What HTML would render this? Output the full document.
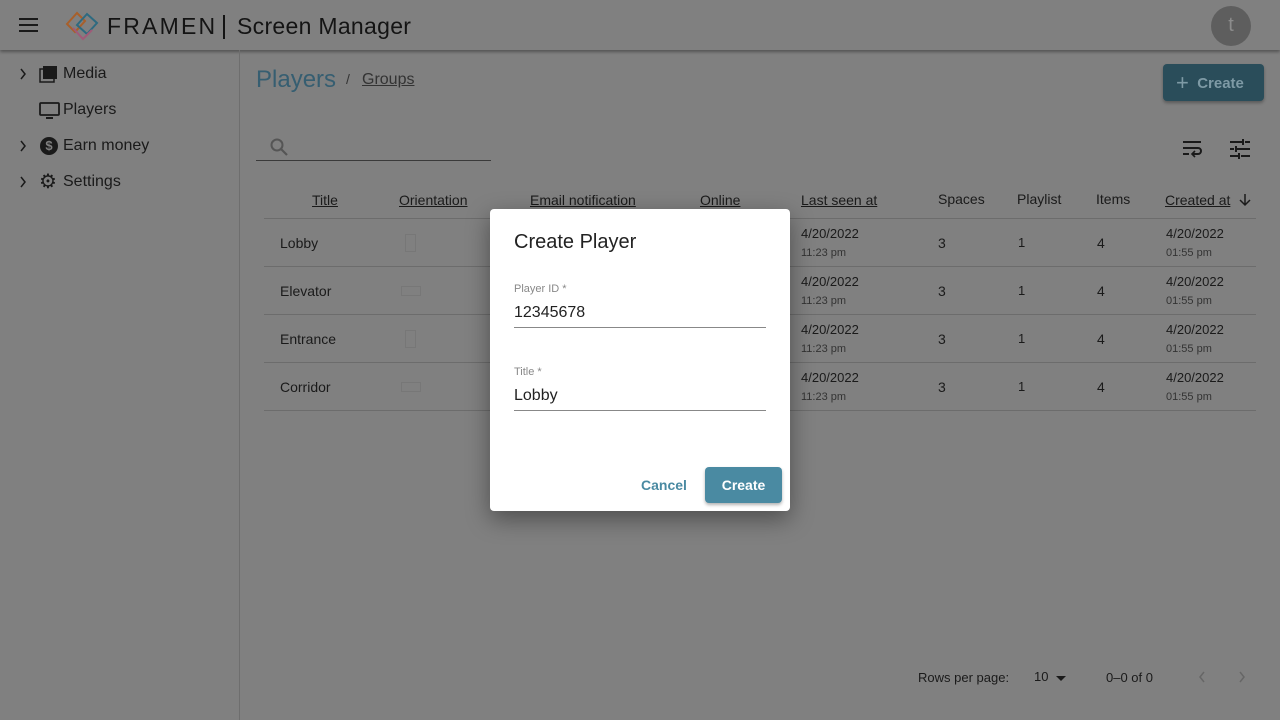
<!DOCTYPE html>
<html><head><meta charset="utf-8"><style>
*{box-sizing:border-box;margin:0;padding:0}
body{width:1280px;height:720px;overflow:hidden;background:#808080;font-family:"Liberation Sans",sans-serif;color:#141414;position:relative}
.abs{position:absolute}
.hdr{left:0;top:0;width:1280px;height:50px;background:#808080;box-shadow:0 2px 3px rgba(0,0,0,.35)}
.side{left:239px;top:50px;width:1px;height:670px;background:#6e6e6e}
.nav{font-size:16px;color:#1a1a1a}
.hd{font-size:14px;color:#1a1a1a}
.u{text-decoration:underline}
.line{left:264px;width:992px;height:1px;background:#6c6c6c}
.c{font-size:14px;color:#1a1a1a}
.d{font-size:13px;color:#1a1a1a}
.t{font-size:11px;color:#333}
.dlg{left:490px;top:209px;width:300px;height:302px;background:#fff;border-radius:4px;box-shadow:0 8px 24px rgba(0,0,0,.4)}
</style></head><body>
<div class="abs hdr"></div>
<svg class="abs" style="left:18px;top:17px" width="22" height="16"><path d="M1 2h19M1 8h19M1 14h19" stroke="#1a1a1a" stroke-width="2"/></svg>
<svg class="abs" style="left:64px;top:8px" width="38" height="34"><path d="M3 16 L13 5 L21 13 L11 24Z" fill="none" stroke="#a85f2a" stroke-width="2"/><path d="M13 17 L23 6 L33 15 L23 26Z" fill="none" stroke="#2d6a80" stroke-width="2"/><path d="M9 20 L19 31 L28 22" fill="none" stroke="#a05a78" stroke-width="2"/></svg>
<div class="abs" style="left:107px;top:13px;font-size:23px;letter-spacing:2.2px;color:#141414">FRAMEN</div>
<div class="abs" style="left:223px;top:15px;width:2px;height:24px;background:#141414"></div>
<div class="abs" style="left:237px;top:13px;font-size:23px;letter-spacing:.3px;color:#141414">Screen Manager</div>
<div class="abs" style="left:1211px;top:6px;width:40px;height:40px;border-radius:50%;background:#5e5e5e;color:#8c8c8c;font-size:20px;text-align:center;line-height:38px">t</div>
<div class="abs side"></div>
<svg class="abs" style="left:19px;top:68px" width="8" height="12"><path d="M2 1l4 5-4 5" fill="none" stroke="#1a1a1a" stroke-width="1.5"/></svg>
<svg class="abs" style="left:39px;top:65px" width="20" height="18"><rect x="1" y="4" width="14" height="13" fill="none" stroke="#1a1a1a" stroke-width="1.5"/><rect x="4" y="1" width="14" height="13" fill="#1a1a1a"/></svg>
<div class="abs nav" style="left:63px;top:65px">Media</div>
<svg class="abs" style="left:39px;top:101px" width="21" height="18"><rect x="1" y="2" width="19" height="12" rx="1" fill="none" stroke="#1a1a1a" stroke-width="1.8"/><path d="M7 17h7" stroke="#1a1a1a" stroke-width="2"/></svg>
<div class="abs nav" style="left:63px;top:101px">Players</div>
<svg class="abs" style="left:19px;top:140px" width="8" height="12"><path d="M2 1l4 5-4 5" fill="none" stroke="#1a1a1a" stroke-width="1.5"/></svg>
<div class="abs" style="left:40px;top:137px;width:18px;height:18px;border-radius:50%;background:#1a1a1a;color:#808080;font-size:13px;font-weight:bold;text-align:center;line-height:18px">$</div>
<div class="abs nav" style="left:63px;top:137px">Earn money</div>
<svg class="abs" style="left:19px;top:176px" width="8" height="12"><path d="M2 1l4 5-4 5" fill="none" stroke="#1a1a1a" stroke-width="1.5"/></svg>
<div class="abs" style="left:39px;top:169px;font-size:20px;color:#1a1a1a">⚙</div>
<div class="abs nav" style="left:63px;top:173px">Settings</div>
<div class="abs" style="left:256px;top:66px;font-size:24px;color:#365e71">Players</div>
<div class="abs" style="left:346px;top:71px;font-size:14px;color:#333">/</div>
<div class="abs u" style="left:362px;top:71px;font-size:16px;color:#333">Groups</div>
<div class="abs" style="left:1163px;top:64px;width:101px;height:37px;background:#2a4d5a;border-radius:4px;box-shadow:0 2px 3px rgba(0,0,0,.3);color:#7e9aa5;font-size:15px;font-weight:bold;line-height:37px;padding-left:13px"><span style="font-size:22px;font-weight:normal;vertical-align:-2px">+</span>&nbsp; Create</div>
<svg class="abs" style="left:269px;top:137px" width="20" height="20"><circle cx="8" cy="8" r="5.5" fill="none" stroke="#555" stroke-width="2"/><path d="M12 12l6 6" stroke="#555" stroke-width="2.2"/></svg>
<div class="abs" style="left:256px;top:160px;width:235px;height:1px;background:#3a3a3a"></div>
<svg class="abs" style="left:1182px;top:139px" width="22" height="20"><path d="M1 3h18M1 9h15a3 3 0 0 1 0 6h-5M1 15h6" fill="none" stroke="#1a1a1a" stroke-width="2"/><path d="M13 12l-3 3 3 3" fill="none" stroke="#1a1a1a" stroke-width="1.6"/></svg>
<svg class="abs" style="left:1230px;top:139px" width="20" height="20"><path d="M0 3h12M15 3h5M0 10h4M7 10h13M0 17h8M11 17h9M13 0v6M6 7v6M9 14v6" stroke="#1a1a1a" stroke-width="2"/></svg>
<div class="abs hd u" style="left:312px;top:192px">Title</div>
<div class="abs hd u" style="left:399px;top:192px">Orientation</div>
<div class="abs hd u" style="left:530px;top:192px">Email notification</div>
<div class="abs hd u" style="left:700px;top:192px">Online</div>
<div class="abs hd u" style="left:801px;top:192px">Last seen at</div>
<div class="abs hd" style="left:938px;top:191px">Spaces</div>
<div class="abs hd" style="left:1017px;top:191px">Playlist</div>
<div class="abs hd" style="left:1096px;top:191px">Items</div>
<div class="abs hd u" style="left:1165px;top:192px">Created at</div>
<svg class="abs" style="left:1239px;top:193px" width="12" height="14"><path d="M6 1v11M1 7l5 5 5-5" fill="none" stroke="#1a1a1a" stroke-width="1.5"/></svg>
<div class="abs line" style="top:218px"></div>
<div class="abs line" style="top:266px"></div>
<div class="abs line" style="top:314px"></div>
<div class="abs line" style="top:362px"></div>
<div class="abs line" style="top:410px"></div>
<div class="abs c" style="left:280px;top:235px">Lobby</div>
<div class="abs c" style="left:280px;top:283px">Elevator</div>
<div class="abs c" style="left:280px;top:331px">Entrance</div>
<div class="abs c" style="left:280px;top:379px">Corridor</div>
<div class="abs" style="left:405px;top:234px;width:11px;height:18px;border:1px solid #777"></div>
<div class="abs" style="left:401px;top:286px;width:20px;height:10px;border:1px solid #777"></div>
<div class="abs" style="left:405px;top:330px;width:11px;height:18px;border:1px solid #777"></div>
<div class="abs" style="left:401px;top:382px;width:20px;height:10px;border:1px solid #777"></div>
<div id="rows"></div>
<script>
var h='';[226,274,322,370].forEach(function(y){
h+='<div class="abs d" style="left:801px;top:'+y+'px">4/20/2022</div><div class="abs t" style="left:801px;top:'+(y+21)+'px">11:23 pm</div>';
h+='<div class="abs c" style="left:938px;top:'+(y+9)+'px">3</div><div class="abs d" style="left:1018px;top:'+(y+9)+'px">1</div><div class="abs c" style="left:1097px;top:'+(y+9)+'px">4</div>';
h+='<div class="abs d" style="left:1166px;top:'+y+'px">4/20/2022</div><div class="abs t" style="left:1166px;top:'+(y+21)+'px">01:55 pm</div>';});
document.getElementById('rows').innerHTML=h;
</script>
<div class="abs d" style="left:918px;top:670px">Rows per page:</div>
<div class="abs d" style="left:1034px;top:669px">10</div>
<div class="abs" style="left:1056px;top:676px;border:5px solid transparent;border-top-color:#1a1a1a"></div>
<div class="abs d" style="left:1106px;top:670px">0–0 of 0</div>
<svg class="abs" style="left:1198px;top:671px" width="8" height="12"><path d="M6 1L2 6l4 5" fill="none" stroke="#666" stroke-width="1.5"/></svg>
<svg class="abs" style="left:1238px;top:671px" width="8" height="12"><path d="M2 1l4 5-4 5" fill="none" stroke="#666" stroke-width="1.5"/></svg>
<div class="abs dlg"></div>
<div class="abs" style="left:514px;top:231px;font-size:20px;color:#222">Create Player</div>
<div class="abs" style="left:514px;top:283px;font-size:11px;color:#888">Player ID *</div>
<div class="abs" style="left:514px;top:304px;font-size:16px;color:#222">12345678</div>
<div class="abs" style="left:514px;top:327px;width:252px;height:1px;background:#888"></div>
<div class="abs" style="left:514px;top:366px;font-size:11px;color:#888">Title *</div>
<div class="abs" style="left:514px;top:387px;font-size:16px;color:#222">Lobby</div>
<div class="abs" style="left:514px;top:410px;width:252px;height:1px;background:#888"></div>
<div class="abs" style="left:641px;top:477px;font-size:14px;font-weight:bold;color:#4a8aa2">Cancel</div>
<div class="abs" style="left:705px;top:467px;width:77px;height:36px;background:#4a8aa2;border-radius:4px;box-shadow:0 2px 3px rgba(0,0,0,.3);color:#fff;font-size:14px;font-weight:bold;text-align:center;line-height:36px">Create</div>
</body></html>
